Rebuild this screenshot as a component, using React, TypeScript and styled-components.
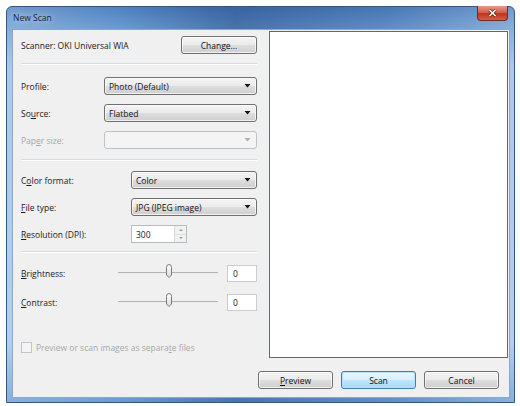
import React from 'react';
import styled, {createGlobalStyle, css} from "styled-components";

const GlobalStyle = createGlobalStyle`
    html, body {
        margin: 0;
        padding: 0;
        background: #ffffff;
    }
    body {
        font-family: "Open Sans", "Noto Sans", "Liberation Sans", sans-serif;
        font-size: 8.5px;
        color: #1a1a1a;
    }
`

const Window = styled.div`
    display: flex;
    flex-direction: column;
    width: 509px;
    height: 397px;
    margin: 6px 0 0 6px;
    box-sizing: border-box;
    border: 1px solid #33577f;
    border-radius: 6px 6px 0 0;
    padding: 0 4px 4px 5px;
    background: linear-gradient(90deg, rgba(255, 255, 255, 0.2), rgba(255, 255, 255, 0) 22%, rgba(10, 40, 100, 0.35) 45%, rgba(10, 40, 100, 0.12) 75%, rgba(255, 255, 255, 0.2)),
    linear-gradient(180deg, #4f82c0 0px, #6c9cd3 22px, #94bde6 60px, #a0c5e9 85%, #6a9cd2 100%);
`

const TitleBar = styled.div`
    display: flex;
    align-items: flex-start;
    justify-content: space-between;
    height: 22px;
`

const Title = styled.span`
    margin: 5px 0 0 1px;
    font-size: 8.5px;
    color: #10233d;
    text-shadow: 0 0 6px rgba(255, 255, 255, 0.9);
`

const CloseButton = styled.div`
    display: flex;
    align-items: center;
    justify-content: center;
    width: 31px;
    height: 15px;
    margin: -1px 2px 0 0;
    box-sizing: border-box;
    border: 1px solid #6e2a24;
    border-top: none;
    border-radius: 0 0 4px 4px;
    background: linear-gradient(180deg, #e49a88 0%, #d4624d 45%, #c0321b 55%, #d0604a 100%);
`

const Client = styled.div`
    flex: 1;
    display: grid;
    grid-template-columns: 256px 1fr;
    grid-template-rows: 1fr auto;
    background: #f0f0f0;
    border: 1px solid #8aa9c9;
`

const LeftPanel = styled.div`
    display: flex;
    flex-direction: column;
    padding: 6px 12px 0 8px;
`

const ScannerRow = styled.div`
    display: flex;
    align-items: center;
    justify-content: space-between;
    height: 18px;
`

const Divider = styled.div<{ $top: number; $bottom: number }>`
    margin: ${p => p.$top}px 0 ${p => p.$bottom}px;
    border-top: 1px solid #d6dbe0;
    border-bottom: 1px solid #ffffff;
`

const FieldGroup = styled.div<{ $gap: number }>`
    display: flex;
    flex-direction: column;
    gap: ${p => p.$gap}px;
`

const Field = styled.div<{ $label: number }>`
    display: grid;
    grid-template-columns: ${p => p.$label}px 1fr;
    align-items: center;
    height: 18px;
`

const Label = styled.span<{ $disabled?: boolean }>`
    color: ${p => p.$disabled ? "#a8a8a8" : "#1a1a1a"};
    white-space: nowrap;
`

const buttonFace = css`
    box-sizing: border-box;
    border: 1px solid #707070;
    border-radius: 3px;
    background: linear-gradient(180deg, #f4f4f4 0%, #ebebeb 48%, #dddddd 52%, #cfcfcf 100%);
    box-shadow: inset 0 0 0 1px rgba(255, 255, 255, 0.7);
`

const Combo = styled.div<{ $disabled?: boolean }>`
    display: flex;
    align-items: center;
    height: 18px;
    padding: 0 5px 0 4px;
    color: #111111;
    ${buttonFace};
    ${p => p.$disabled && css`
        border-color: #bfc4c8;
        background: #f4f4f4;
        box-shadow: none;
    `}
`

const ArrowIcon = styled.svg`
    margin-left: auto;
`

const Button = styled.div<{ $default?: boolean; $width: number }>`
    display: flex;
    align-items: center;
    justify-content: center;
    width: ${p => p.$width}px;
    height: 18px;
    color: #111111;
    ${buttonFace};
    ${p => p.$default && css`
        border-color: #3c7fb1;
        background: linear-gradient(180deg, #eaf6fd 0%, #d9f0fc 48%, #bee6fd 52%, #a7d9f5 100%);
        box-shadow: inset 0 0 0 1px #b6e3fb;
    `}
`

const SpinBox = styled.div`
    display: flex;
    width: 56px;
    height: 18px;
    box-sizing: border-box;
    border: 1px solid #b7bcc2;
    background: #ffffff;
`

const SpinText = styled.span`
    flex: 1;
    display: flex;
    align-items: center;
    padding-left: 4px;
`

const SpinButtons = styled.div`
    display: flex;
    flex-direction: column;
    width: 11px;
    border-left: 1px solid #d7dade;
`

const SpinHalf = styled.div<{ $up?: boolean }>`
    flex: 1;
    display: flex;
    align-items: center;
    justify-content: center;
    background: #f1f1f1;
    border-bottom: ${p => p.$up ? "1px solid #e0e0e0" : "none"};

    &::after {
        content: "";
        border-left: 2px solid transparent;
        border-right: 2px solid transparent;
        ${p => p.$up ? "border-bottom: 2px solid #9a9a9a;" : "border-top: 2px solid #9a9a9a;"}
    }
`

const SliderRow = styled.div`
    display: grid;
    grid-template-columns: 97px 100px 1fr;
    align-items: center;
    height: 18px;
`

const Track = styled.div`
    position: relative;
    height: 18px;

    &::before {
        content: "";
        position: absolute;
        left: 0;
        right: 0;
        top: 8px;
        border-top: 1px solid #b4b4b4;
        border-bottom: 1px solid #ececec;
    }
`

const Thumb = styled.svg`
    position: absolute;
    left: 47px;
    top: 0;
`

const TextBox = styled.div`
    display: flex;
    align-items: center;
    height: 17px;
    margin-left: 9px;
    padding-left: 5px;
    box-sizing: border-box;
    border: 1px solid #c9ccd0;
    background: #ffffff;
`

const CheckRow = styled.div`
    display: flex;
    align-items: center;
    gap: 4px;
    margin-top: 31px;
    color: #a8a8a8;
`

const CheckBox = styled.div`
    width: 11px;
    height: 11px;
    box-sizing: border-box;
    border: 1px solid #c2c6ca;
    background: #f4f4f4;
`

const Preview = styled.div`
    margin: 1px 1px 0 0;
    border: 1px solid #5f6770;
    background: #ffffff;
`

const ButtonRow = styled.div`
    grid-column: 1 / 3;
    display: flex;
    justify-content: flex-end;
    gap: 8px;
    padding: 13px 10px 8px 0;
`

const Key = styled.u`
    text-underline-offset: 1px;
`

const Arrow = ({disabled}: { disabled?: boolean }) => (
    <ArrowIcon width="7" height="4" viewBox="0 0 7 4">
        <path d="M0.5 0 L6.5 0 L3.5 3.5 Z" fill={disabled ? "#b0b0b0" : "#111111"}/>
    </ArrowIcon>
);

const SliderThumb = () => (
    <Thumb width="8" height="14" viewBox="0 0 8 14">
        <defs>
            <linearGradient id="thumbFill" x1="0" x2="0" y1="0" y2="1">
                <stop offset="0" stopColor="#ffffff"/>
                <stop offset="1" stopColor="#dcdcdc"/>
            </linearGradient>
        </defs>
        <path d="M1.5 3.5 Q1.5 0.5 4 0.5 Q6.5 0.5 6.5 3.5 L6.5 11 L4 13.5 L1.5 11 Z"
              fill="url(#thumbFill)" stroke="#7a7a7a" strokeWidth="1"/>
    </Thumb>
);

const Slider = ({label, value}: { label: React.ReactNode; value: string }) => (
    <SliderRow>
        <Label>{label}</Label>
        <Track><SliderThumb/></Track>
        <TextBox>{value}</TextBox>
    </SliderRow>
);

export default function App() {
    return (
        <>
            <GlobalStyle/>
            <Window>
                <TitleBar>
                    <Title>New Scan</Title>
                    <CloseButton>
                        <svg width="9" height="8" viewBox="0 0 9 8">
                            <path d="M1.5 1 L7.5 7 M7.5 1 L1.5 7" stroke="#5a1a12" strokeWidth="3"/>
                            <path d="M1.5 1 L7.5 7 M7.5 1 L1.5 7" stroke="#ffffff" strokeWidth="1.6"/>
                        </svg>
                    </CloseButton>
                </TitleBar>
                <Client>
                    <LeftPanel>
                        <ScannerRow>
                            <Label>Scanner: OKI Universal WIA</Label>
                            <Button $width={76}>Chan<Key>g</Key>e...</Button>
                        </ScannerRow>
                        <Divider $top={9} $bottom={12}/>
                        <FieldGroup $gap={9}>
                            <Field $label={83}>
                                <Label>Prof<Key>i</Key>le:</Label>
                                <Combo>Photo (Default)<Arrow/></Combo>
                            </Field>
                            <Field $label={83}>
                                <Label>So<Key>u</Key>rce:</Label>
                                <Combo>Flatbed<Arrow/></Combo>
                            </Field>
                            <Field $label={83}>
                                <Label $disabled>Pap<Key>e</Key>r size:</Label>
                                <Combo $disabled><Arrow disabled/></Combo>
                            </Field>
                        </FieldGroup>
                        <Divider $top={10} $bottom={10}/>
                        <FieldGroup $gap={9}>
                            <Field $label={110}>
                                <Label>C<Key>o</Key>lor format:</Label>
                                <Combo>Color<Arrow/></Combo>
                            </Field>
                            <Field $label={110}>
                                <Label><Key>F</Key>ile type:</Label>
                                <Combo>JPG (JPEG image)<Arrow/></Combo>
                            </Field>
                            <Field $label={110}>
                                <Label><Key>R</Key>esolution (DPI):</Label>
                                <SpinBox>
                                    <SpinText>300</SpinText>
                                    <SpinButtons>
                                        <SpinHalf $up/>
                                        <SpinHalf/>
                                    </SpinButtons>
                                </SpinBox>
                            </Field>
                        </FieldGroup>
                        <Divider $top={8} $bottom={11}/>
                        <FieldGroup $gap={11}>
                            <Slider label={<><Key>B</Key>rightness:</>} value="0"/>
                            <Slider label={<><Key>C</Key>ontrast:</>} value="0"/>
                        </FieldGroup>
                        <CheckRow>
                            <CheckBox/>
                            <span>Preview or scan images as separa<Key>t</Key>e files</span>
                        </CheckRow>
                    </LeftPanel>
                    <Preview/>
                    <ButtonRow>
                        <Button $width={75}><Key>P</Key>review</Button>
                        <Button $width={75} $default>Scan</Button>
                        <Button $width={75}>Cancel</Button>
                    </ButtonRow>
                </Client>
            </Window>
        </>
    );
}
